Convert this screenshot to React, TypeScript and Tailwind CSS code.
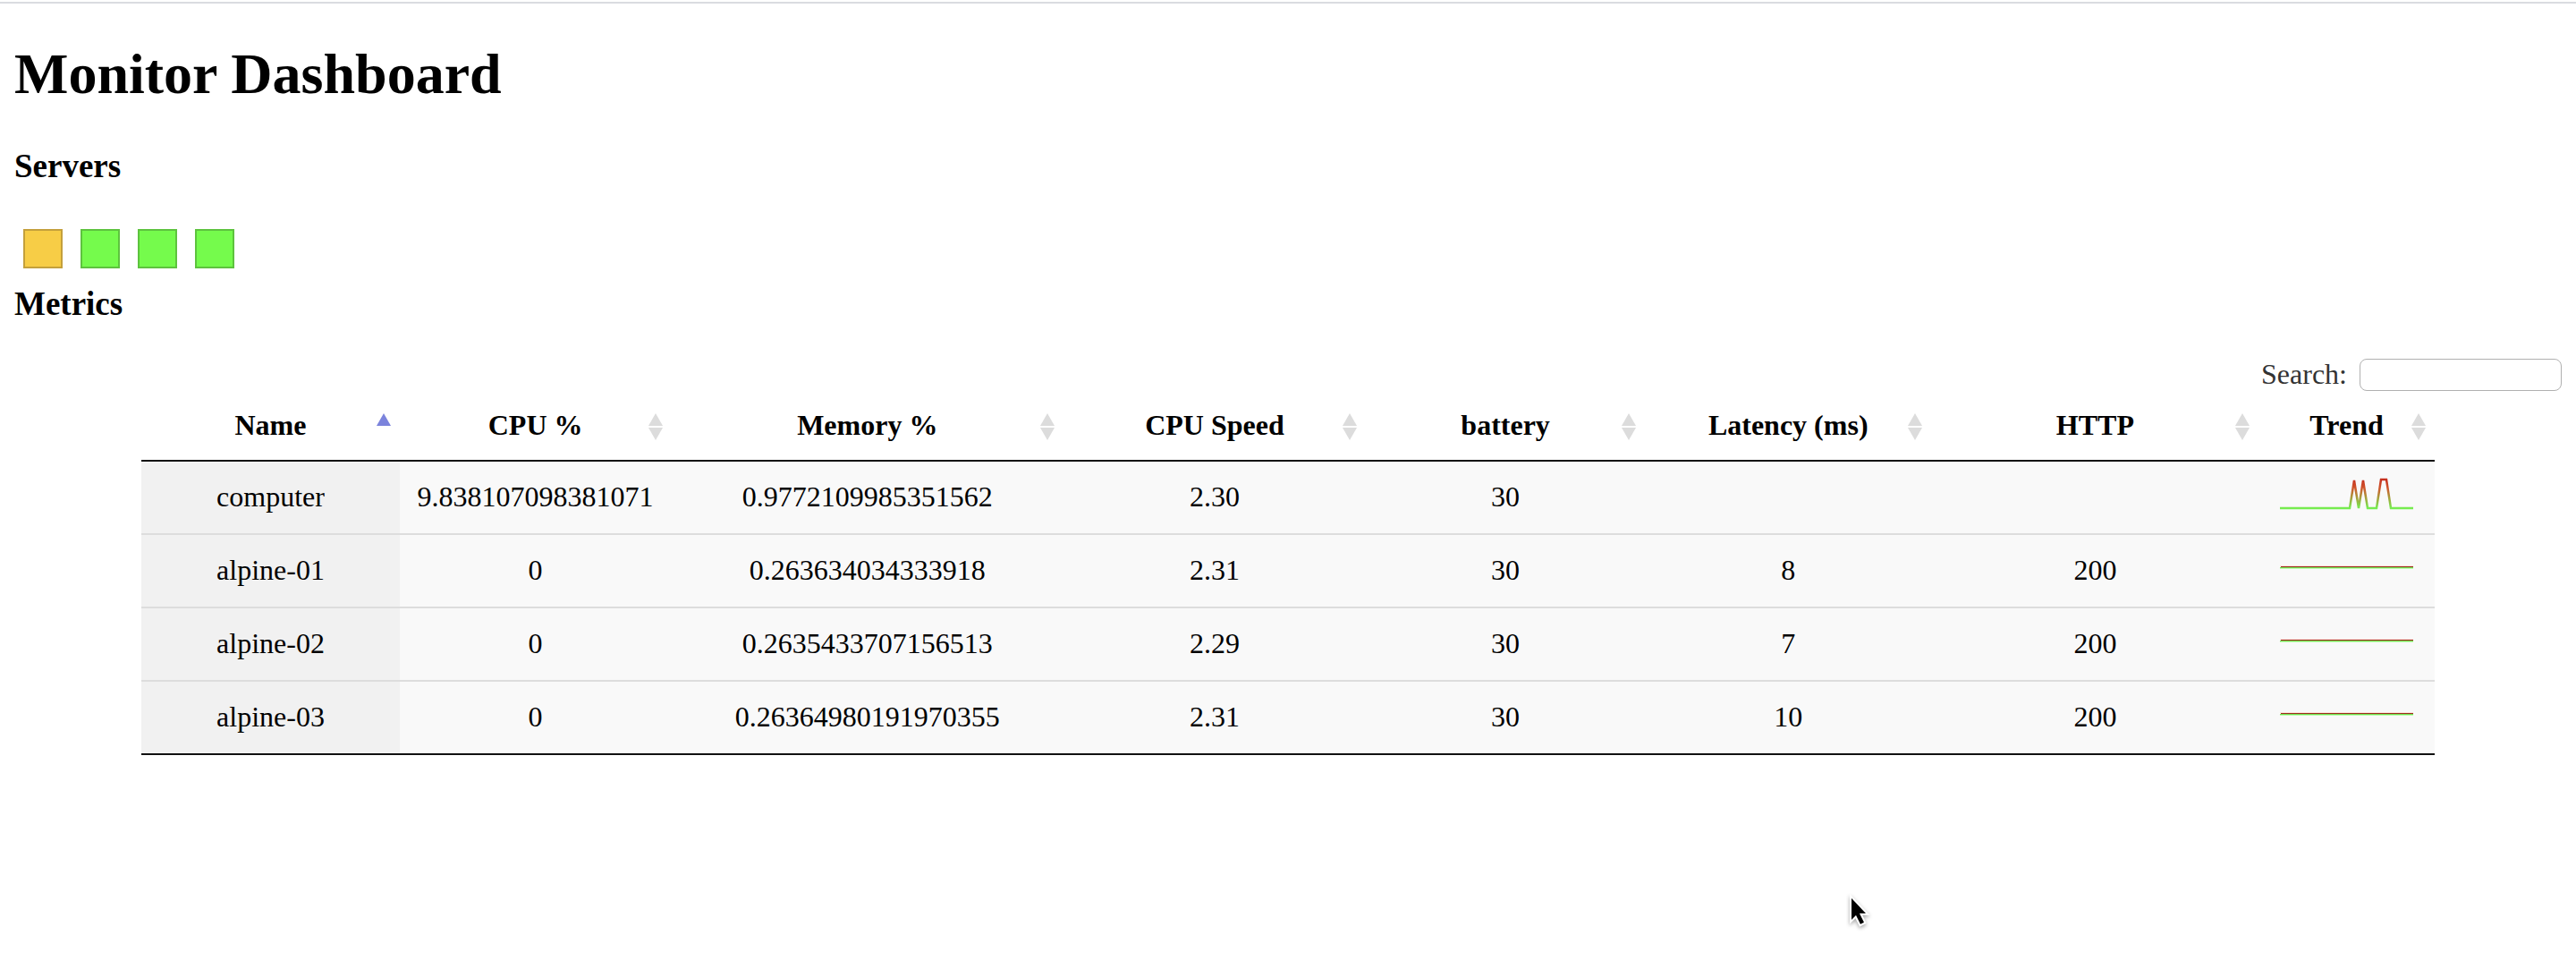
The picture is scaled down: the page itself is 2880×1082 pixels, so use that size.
import { useState } from "react";

type Server = {
  name: string;
  cpu: string;
  memory: string;
  speed: string;
  battery: string;
  latency: string;
  http: string;
  trend: string;
};

const statuses = [
  { name: "computer", className: "border-[#c4a03b] bg-[#f7cd46]" },
  { name: "alpine-01", className: "border-[#5dc33e] bg-[#75fb4c]" },
  { name: "alpine-02", className: "border-[#5dc33e] bg-[#75fb4c]" },
  { name: "alpine-03", className: "border-[#5dc33e] bg-[#75fb4c]" },
];

const flat = "M2 20H150";
const servers: Server[] = [
  {
    name: "computer",
    cpu: "9.838107098381071",
    memory: "0.9772109985351562",
    speed: "2.30",
    battery: "30",
    latency: "",
    http: "",
    trend: "M1 37H79L84 6L89 37L94 6L99 37H109L114 5H120L125 37H150",
  },
  { name: "alpine-01", cpu: "0", memory: "0.263634034333918", speed: "2.31", battery: "30", latency: "8", http: "200", trend: flat },
  { name: "alpine-02", cpu: "0", memory: "0.2635433707156513", speed: "2.29", battery: "30", latency: "7", http: "200", trend: flat },
  { name: "alpine-03", cpu: "0", memory: "0.26364980191970355", speed: "2.31", battery: "30", latency: "10", http: "200", trend: flat },
];

const columns = [
  { label: "Name", width: "w-[288px]" },
  { label: "CPU %", width: "w-[304px]" },
  { label: "Memory %", width: "w-[438px]" },
  { label: "CPU Speed", width: "w-[338px]" },
  { label: "battery", width: "w-[312px]" },
  { label: "Latency (ms)", width: "w-[320px]" },
  { label: "HTTP", width: "w-[366px]" },
  { label: "Trend", width: "w-[196px]" },
];

function SortIcon({ sorted }: { sorted: boolean }) {
  return (
    <svg className="absolute right-2 top-6" width="20" height="30" viewBox="0 0 20 30" aria-hidden="true">
      <path d="M10 0L18 14H2Z" fill={sorted ? "#7b83dc" : "#dcdcdc"} />
      {!sorted && <path d="M2 16H18L10 30Z" fill="#dcdcdc" />}
    </svg>
  );
}

function Trend({ path, index }: { path: string; index: number }) {
  const spiky = path !== flat;
  return (
    <svg className="mx-auto block" width="152" height="48" viewBox="0 0 152 48" role="img" aria-label="Trend">
      {spiky ? (
        <>
          <defs>
            <linearGradient id={`trend-${index}`} gradientUnits="userSpaceOnUse" x1="0" y1="5" x2="0" y2="37">
              <stop offset="0" stopColor="#c5301f" />
              <stop offset="0.3" stopColor="#d0562c" />
              <stop offset="0.65" stopColor="#a5a03c" />
              <stop offset="1" stopColor="#75ee50" />
            </linearGradient>
          </defs>
          <path d={path} fill="none" stroke={`url(#trend-${index})`} strokeWidth="2.5" />
        </>
      ) : (
        <>
          <rect x="1" y="19" width="149" height="1" fill="#fbe3da" />
          <rect x="2" y="20" width="148" height="1" fill="#9c2f20" />
          <rect x="1" y="21" width="149" height="1" fill="#70e050" />
          <rect x="1" y="22" width="149" height="1" fill="#c0fab0" />
        </>
      )}
    </svg>
  );
}

export default function App() {
  const [query, setQuery] = useState("");
  const rows = servers.filter((s) => s.name.includes(query));

  return (
    <div className="relative min-h-screen border-t-2 border-white bg-white font-['Liberation_Serif',serif] text-[32px] leading-[38px] text-black">
      <div className="border-t-2 border-[#dadce0]" />
      <main className="px-4 pt-[42px]">
        <h1 className="text-[64px] leading-[74px] font-bold">Monitor Dashboard</h1>
        <h3 className="mt-[45px] text-[37px] leading-[42px] font-bold">Servers</h3>
        <div className="mt-[49px] flex gap-5 px-[10px]">
          {statuses.map((s) => (
            <button key={s.name} type="button" aria-label={s.name} className={`size-11 border-2 ${s.className}`} />
          ))}
        </div>
        <h3 className="mt-[19px] text-[37px] leading-[42px] font-bold">Metrics</h3>

        <label className="mt-[39px] flex items-center justify-end gap-[14px] text-[#333333]">
          <span className="pb-[2px] leading-9">Search:</span>
          <input
            type="search"
            value={query}
            onChange={(e) => setQuery(e.target.value)}
            className="h-9 w-[226px] appearance-none rounded-[8px] border border-[#b0b0b0] bg-white px-2 text-[22px] outline-none"
          />
        </label>

        <table className="mx-auto w-[90%] table-fixed border-separate border-spacing-0 border-b-2 border-[#111111] text-center">
          <thead>
            <tr>
              {columns.map((c, i) => (
                <th key={c.label} scope="col" className={`${c.width} border-b-2 border-[#111111] p-0`}>
                  <button type="button" className="relative block h-[76px] w-full cursor-pointer pb-[2px] font-bold">
                    {c.label}
                    <SortIcon sorted={i === 0} />
                  </button>
                </th>
              ))}
            </tr>
          </thead>
          <tbody>
            {rows.map((s, i) => {
              const line = i > 0 ? "pb-[2px] border-t-2 border-[#dddddd]" : "pb-[2px]";
              const height = i > 0 ? "h-[82px]" : "h-[80px]";
              return (
                <tr key={s.name} className="bg-[#f9f9f9]">
                  <td className={`${height} ${line} bg-[#f1f1f1]`}>{s.name}</td>
                  <td className={line}>{s.cpu}</td>
                  <td className={line}>{s.memory}</td>
                  <td className={line}>{s.speed}</td>
                  <td className={line}>{s.battery}</td>
                  <td className={line}>{s.latency}</td>
                  <td className={line}>{s.http}</td>
                  <td className={line}>
                    <Trend path={s.trend} index={i} />
                  </td>
                </tr>
              );
            })}
          </tbody>
        </table>
      </main>

      <svg className="absolute left-[2064px] top-[996px]" width="32" height="44" viewBox="0 0 32 44" aria-hidden="true">
        <path
          className="drop-shadow-[0_2px_2px_rgba(0,0,0,0.35)]"
          d="M6 6V30L11 25L16 35L20 33L15 23H22Z"
          fill="#000"
          stroke="#fff"
          strokeWidth="4"
          paintOrder="stroke"
        />
      </svg>
    </div>
  );
}
